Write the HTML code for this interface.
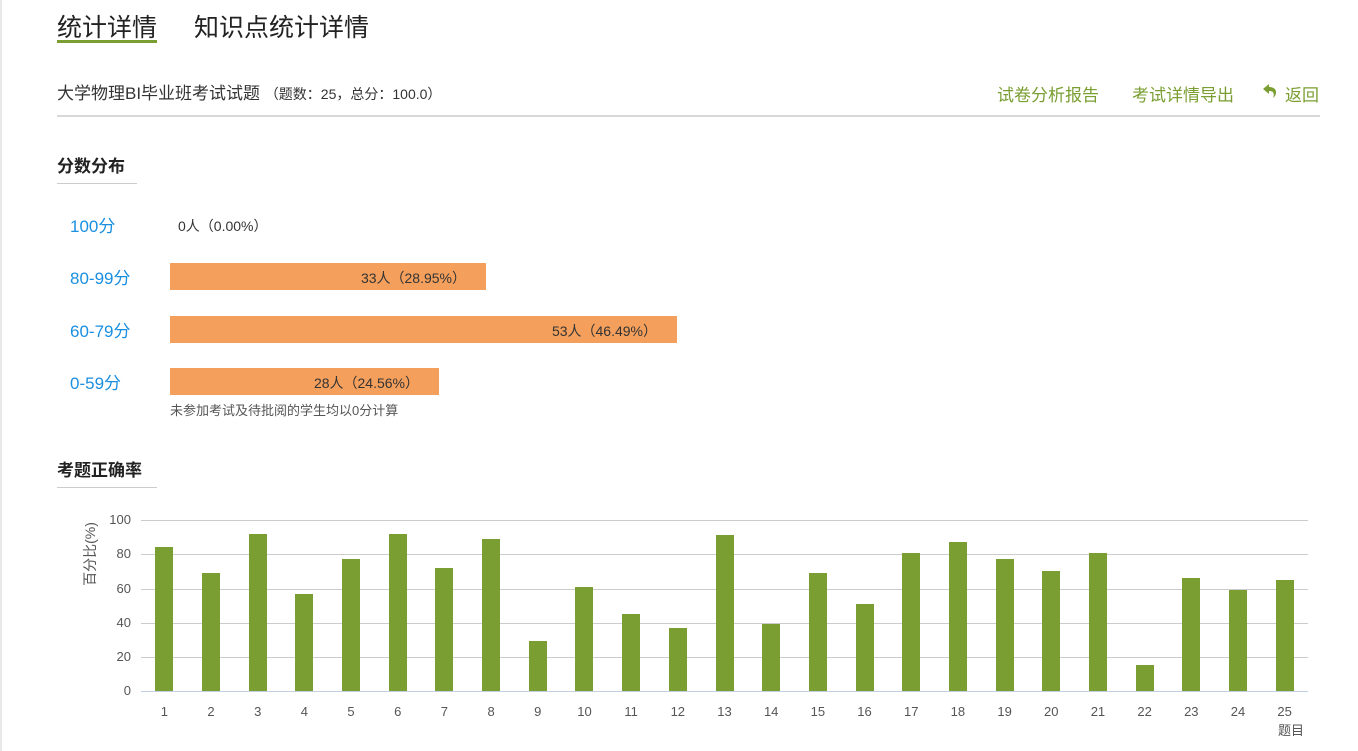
<!DOCTYPE html>
<html><head><meta charset="utf-8"><style>
body{margin:0;width:1358px;height:751px;background:#fff;font-family:"Liberation Sans","Noto Sans CJK SC",sans-serif;position:relative;overflow:hidden}
.a{position:absolute;white-space:nowrap}
.lbl{color:#1a8fe0;font-size:17px}
.bar{position:absolute;background:#f4a05c;height:27px;left:170px}
.bt{position:absolute;font-size:14px;color:#333;top:5px}
.yl{position:absolute;font-size:13px;color:#555;right:1227px;text-align:right}
.gl{position:absolute;left:141px;width:1167px;height:1px;background:#ccc}
.b{position:absolute;width:18px;background:#7a9e32;bottom:60px}
.x{position:absolute;top:704px;font-size:13px;color:#555;width:30px;text-align:center}
</style></head><body>
<div style="position:absolute;left:0;top:0;width:2px;height:751px;background:#e8e8e8"></div>
<div class="a" style="left:57px;top:8px;font-size:25px;color:#222">统计详情</div>
<div style="position:absolute;left:57px;top:40px;width:100px;height:3px;background:#7a9e32"></div>
<div class="a" style="left:194px;top:8px;font-size:25px;color:#222">知识点统计详情</div>
<div class="a" style="left:57px;top:79px;font-size:17px;color:#333">大学物理BI毕业班考试试题 <span style="font-size:14px">（题数：25，总分：100.0）</span></div>
<div class="a" style="left:997px;top:81px;font-size:17px;color:#7a9e32">试卷分析报告</div>
<div class="a" style="left:1132px;top:81px;font-size:17px;color:#7a9e32">考试详情导出</div>
<svg class="a" style="left:1262px;top:82px" width="18" height="18" viewBox="0 0 18 18"><path d="M7 2 L1 7 L7 12 L7 9 C11 9 13 11 11 16 C16 12 15 5 7 5 Z" fill="#7a9e32"/></svg>
<div class="a" style="left:1285px;top:81px;font-size:17px;color:#7a9e32">返回</div>
<div style="position:absolute;left:57px;top:115px;width:1263px;height:2px;background:#d8d8d8"></div>
<div class="a" style="left:57px;top:152px;font-size:17px;font-weight:bold;color:#222">分数分布</div>
<div style="position:absolute;left:57px;top:183px;width:80px;height:1px;background:#ccc"></div>
<div class="a lbl" style="left:70px;top:212px">100分</div>
<div class="a" style="left:178px;top:216px;font-size:14px;color:#333">0人（0.00%）</div>
<div class="a lbl" style="left:70px;top:264px">80-99分</div>
<div class="bar" style="top:263px;width:316px"><span class="bt" style="right:20px">33人（28.95%）</span></div>
<div class="a lbl" style="left:70px;top:317px">60-79分</div>
<div class="bar" style="top:316px;width:507px"><span class="bt" style="right:20px">53人（46.49%）</span></div>
<div class="a lbl" style="left:70px;top:369px">0-59分</div>
<div class="bar" style="top:368px;width:269px"><span class="bt" style="right:20px">28人（24.56%）</span></div>
<div class="a" style="left:170px;top:400px;font-size:13px;color:#555">未参加考试及待批阅的学生均以0分计算</div>
<div class="a" style="left:57px;top:456px;font-size:17px;font-weight:bold;color:#222">考题正确率</div>
<div style="position:absolute;left:57px;top:487px;width:100px;height:1px;background:#ccc"></div>
<div class="a" style="left:58px;top:544px;font-size:14px;color:#555;transform:rotate(-90deg);transform-origin:center">百分比(%)</div>
<div class="gl" style="top:520px"></div><div class="gl" style="top:554px"></div><div class="gl" style="top:589px"></div><div class="gl" style="top:623px"></div><div class="gl" style="top:657px"></div>
<div class="gl" style="top:691px;background:#c0d0e0"></div>
<div class="yl" style="top:512px">100</div><div class="yl" style="top:546px">80</div><div class="yl" style="top:581px">60</div><div class="yl" style="top:615px">40</div><div class="yl" style="top:649px">20</div><div class="yl" style="top:683px">0</div>
<div id="c"></div>
<div class="a" style="left:1278px;top:720px;font-size:13px;color:#555">题目</div>
<script>
var v=[84,69,92,57,77,92,72,89,29,61,45,37,91,39,69,51,81,87,77,70,81,15,66,59,65],h='';
for(var i=0;i<25;i++){var cx=141+46.68*(i+0.5);h+='<div class="b" style="left:'+(cx-9)+'px;height:'+(v[i]*1.71)+'px"></div><div class="x" style="left:'+(cx-15)+'px">'+(i+1)+'</div>';}
document.getElementById('c').innerHTML=h;
</script>
</body></html>
